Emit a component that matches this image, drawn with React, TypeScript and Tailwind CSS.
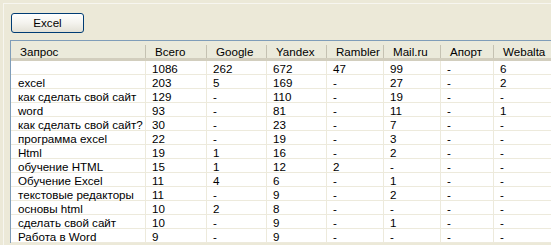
const columns = ['Запрос', 'Всего', 'Google', 'Yandex', 'Rambler', 'Mail.ru', 'Апорт', 'Webalta']

const rows: string[][] = [
  ['', '1086', '262', '672', '47', '99', '-', '6'],
  ['excel', '203', '5', '169', '-', '27', '-', '2'],
  ['как сделать свой сайт', '129', '-', '110', '-', '19', '-', '-'],
  ['word', '93', '-', '81', '-', '11', '-', '1'],
  ['как сделать свой сайт?', '30', '-', '23', '-', '7', '-', '-'],
  ['программа excel', '22', '-', '19', '-', '3', '-', '-'],
  ['Html', '19', '1', '16', '-', '2', '-', '-'],
  ['обучение HTML', '15', '1', '12', '2', '-', '-', '-'],
  ['Обучение Excel', '11', '4', '6', '-', '1', '-', '-'],
  ['текстовые редакторы', '11', '-', '9', '-', '2', '-', '-'],
  ['основы html', '10', '2', '8', '-', '-', '-', '-'],
  ['сделать свой сайт', '10', '-', '9', '-', '1', '-', '-'],
  ['Работа в Word', '9', '-', '9', '-', '-', '-', '-']
]

const grid = 'grid grid-cols-[135px_61px_60px_60px_57px_57px_53px_120px]'

function HeaderCell({ label }: { label: string }) {
  return (
    <div className="flex h-[17px] items-center">
      <span className="flex-1 truncate pl-[9px] pt-[4px] leading-[13px]">{label}</span>
      <div className="mt-[3px] h-[13px] w-px bg-[#C5C2B2]" />
    </div>
  )
}

export default function App() {
  return (
    <div
      className="h-[245px] w-[551px] overflow-hidden bg-[#ECE9D8] pl-[3px] pt-[3px] text-[11.6px] text-black"
      style={{ fontFamily: '"Liberation Sans", Arial, sans-serif' }}
    >
      <div className="h-[300px] w-[700px] border-l border-t border-[#F7F6F0] pl-[7px] pt-[9px]">
        <button className="flex h-[20px] w-[73px] items-center justify-center rounded-[3px] border border-[#003C74] bg-gradient-to-b from-white via-[#F4F3EE] to-[#E3E1D6] leading-none">
          Excel
        </button>

        <div className="ml-[-1px] mt-[7px] border-l border-t border-[#7F9DB9] bg-white">
          <div className={`${grid} border-b-[3px] border-[#D2CEBE] bg-[#EBEADB]`}>
            {columns.map((c) => (
              <HeaderCell key={c} label={c} />
            ))}
          </div>
          {rows.map((row, i) => (
            <div className={grid} key={i}>
              {row.map((cell, j) => (
                <div
                  key={j}
                  className={`h-[14px] whitespace-nowrap border-b border-r border-[#EDEADC] leading-[15px] ${
                    j === 0 ? 'pl-[7px]' : 'pl-[6px]'
                  }`}
                >
                  {cell}
                </div>
              ))}
            </div>
          ))}
        </div>
      </div>
    </div>
  )
}
